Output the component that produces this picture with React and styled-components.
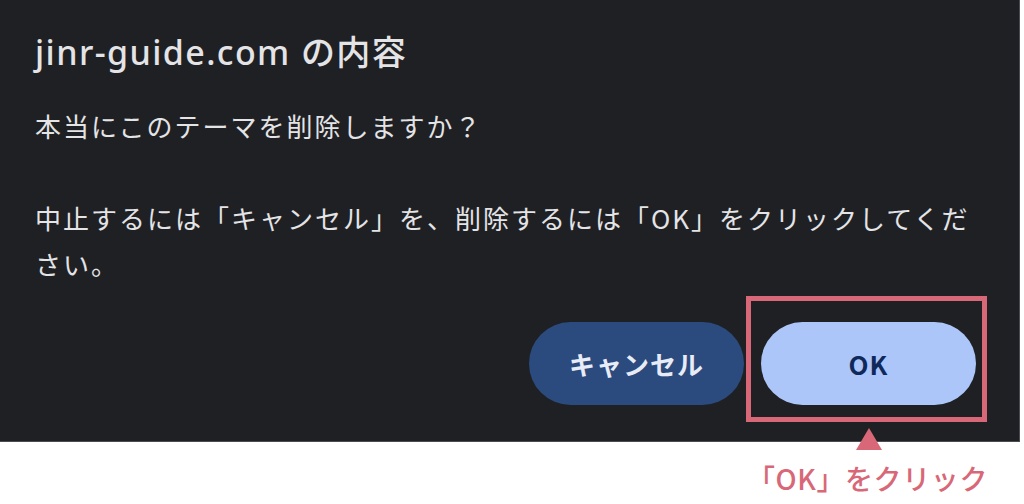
import React from "react";
import styled, { createGlobalStyle } from "styled-components";

const GlobalStyle = createGlobalStyle`
    html, body {
      margin: 0;
      padding: 0;
      background: #ffffff;
    }
    body {
      font-family: "Noto Sans", "Noto Sans CJK JP", sans-serif;
    }
  `,
  Page = styled.div`
    width: 1024px;
    height: 504px;
    overflow: hidden;
    background: #ffffff;
  `,
  Dialog = styled.div`
    box-sizing: border-box;
    width: 1020px;
    height: 442px;
    padding: 24px 43px 0 35px;
    background: #1f2023;
    border-right: 1px solid #4a4c51;
    border-bottom: 1px solid #4a4c51;
    color: #e4e4e7;
    display: flex;
    flex-direction: column;
  `,
  Title = styled.h1`
    margin: 0;
    font-family: "Noto Sans", "Noto Sans CJK JP", sans-serif;
    font-size: 34px;
    font-weight: 500;
    line-height: 56px;
    letter-spacing: 1.4px;
  `,
  Message = styled.p`
    margin: 23px 0 0;
    font-family: "Noto Sans CJK JP", sans-serif;
    font-size: 26px;
    line-height: 46px;
    letter-spacing: 2px;
    white-space: pre-wrap;
    width: 950px;
  `,
  Actions = styled.div`
    margin-top: auto;
    margin-bottom: 36px;
    display: flex;
    justify-content: flex-end;
    gap: 17px;
  `,
  Button = styled.button`
    width: 215px;
    height: 83px;
    border: none;
    border-radius: 42px;
    font-family: "Noto Sans CJK JP", sans-serif;
    font-size: 26px;
    font-weight: 700;
    letter-spacing: 1px;
    background: ${(p) => (p.primary ? "#adc6fa" : "#2b4a7e")};
    color: ${(p) => (p.primary ? "#0f2a5a" : "#e8ecf6")};
    cursor: pointer;
  `,
  Target = styled.div`
    position: relative;
  `,
  Highlight = styled.div`
    position: absolute;
    top: -26px;
    left: -15px;
    right: -11px;
    bottom: -17px;
    border: 5px solid #d86878;
    pointer-events: none;
  `,
  Arrow = styled.div`
    position: absolute;
    top: 106px;
    left: 95px;
    width: 0;
    height: 0;
    border-left: 13px solid transparent;
    border-right: 13px solid transparent;
    border-bottom: 22px solid #d86878;
  `,
  CalloutRow = styled.div`
    display: flex;
    justify-content: flex-end;
    padding: 16px 36px 0 0;
  `,
  Callout = styled.div`
    font-family: "Noto Sans CJK JP", sans-serif;
    font-size: 28px;
    font-weight: 500;
    line-height: 40px;
    letter-spacing: 0.6px;
    color: #d86878;
  `;

const App = () => (
  <Page>
    <GlobalStyle />
    <Dialog>
      <Title>jinr-guide.com の内容</Title>
      <Message>
        {"本当にこのテーマを削除しますか？\n\n中止するには「キャンセル」を、削除するには「OK」をクリックしてください。"}
      </Message>
      <Actions>
        <Button>キャンセル</Button>
        <Target>
          <Button primary>OK</Button>
          <Highlight />
          <Arrow />
        </Target>
      </Actions>
    </Dialog>
    <CalloutRow>
      <Callout>「OK」をクリック</Callout>
    </CalloutRow>
  </Page>
);

export default App;
